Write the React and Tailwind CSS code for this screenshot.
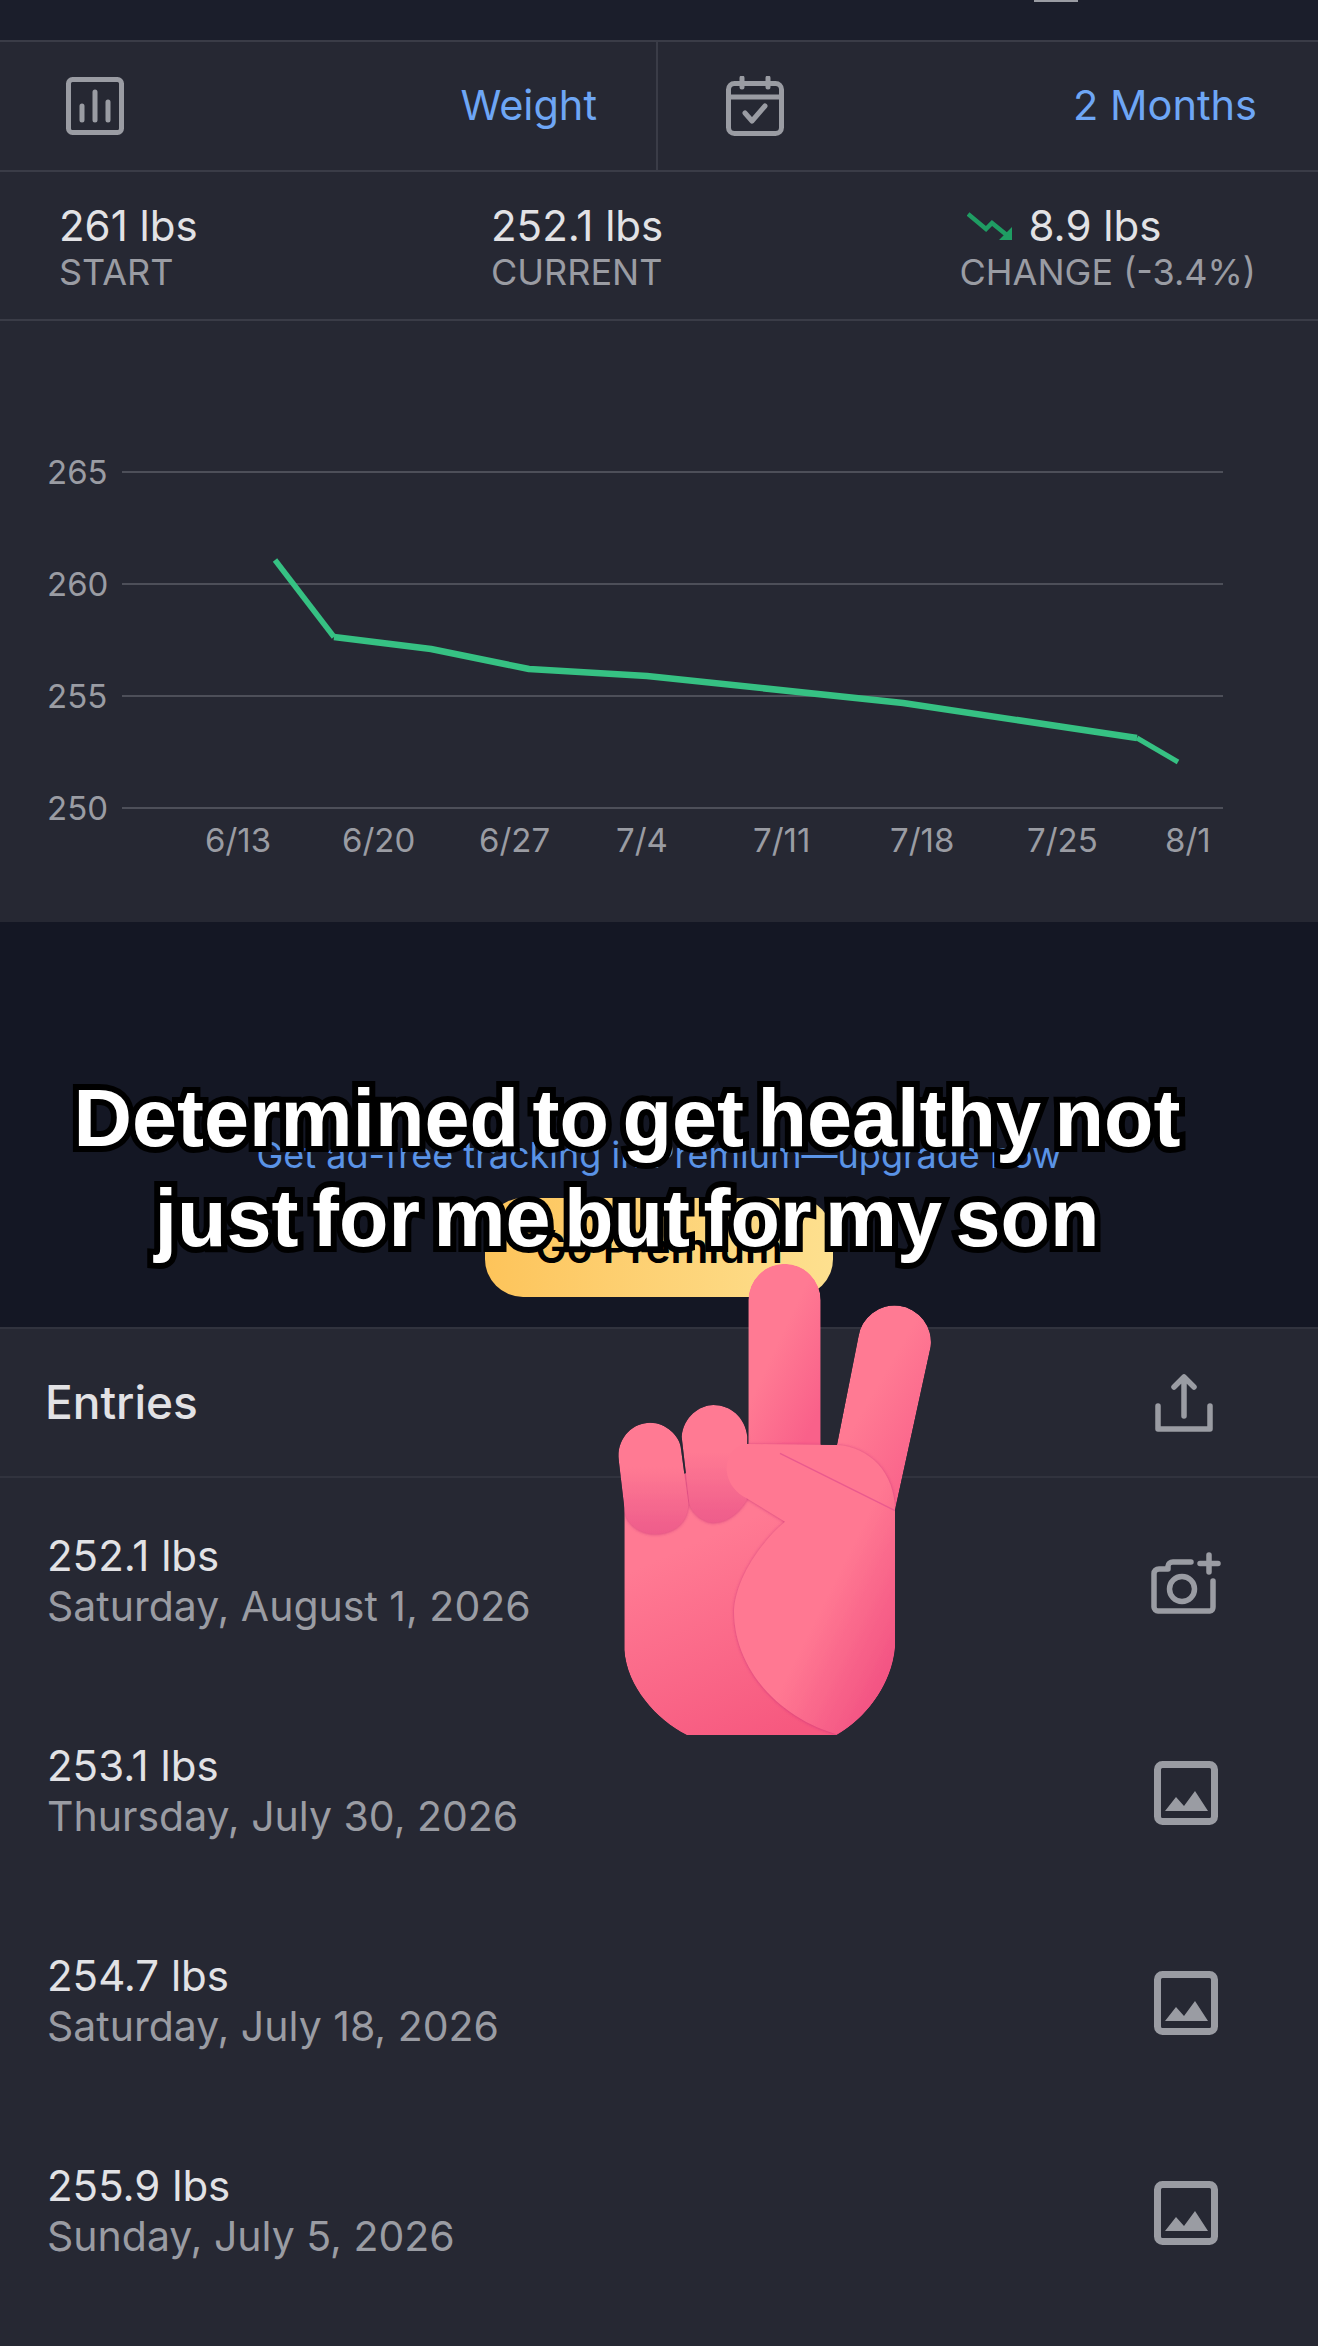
import React from 'react'

const entries = [
  { weight: '252.1 lbs', date: 'Saturday, August 1, 2026', camera: true },
  { weight: '253.1 lbs', date: 'Thursday, July 30, 2026' },
  { weight: '254.7 lbs', date: 'Saturday, July 18, 2026' },
  { weight: '255.9 lbs', date: 'Sunday, July 5, 2026' },
]

const yTicks = [
  { label: '265', y: 472 },
  { label: '260', y: 584 },
  { label: '255', y: 696 },
  { label: '250', y: 808 },
]

const xTicks = [
  { label: '6/13', x: 205 },
  { label: '6/20', x: 342 },
  { label: '6/27', x: 479 },
  { label: '7/4', x: 616 },
  { label: '7/11', x: 753 },
  { label: '7/18', x: 890 },
  { label: '7/25', x: 1027 },
  { label: '8/1', x: 1165 },
]

const fingers = {
  middle: 'M475 640V180A108 108 0 0 1 692 180V640Z',
  index: 'M736 640L805 292A108 108 0 0 1 1022 320L915 810Z',
  palm: 'M103 760V1230C110 1340 200 1440 290 1485H740C820 1440 905 1340 915 1220V780L470 640Z',
  ring: 'M275 590C280 530 330 495 370 495C420 495 465 530 472 590L470 780C440 830 400 848 370 848C340 848 305 820 298 790Z',
  pinky: 'M85 650C85 590 130 548 180 548C230 548 268 590 272 620L295 790C295 850 250 882 195 882C150 882 115 855 105 820Z',
  thumb: 'M470 612C430 615 410 650 410 690C412 730 440 760 470 775L585 845C530 890 440 1000 432 1110C430 1280 560 1430 740 1483C820 1440 905 1340 915 1220V810C915 700 840 620 740 615Z',
}

function ChartIcon() {
  return (
    <svg width="60" height="60" viewBox="0 0 60 60" fill="none" stroke="#9a9ca3" strokeWidth="5" strokeLinecap="round">
      <rect x="3.5" y="3.5" width="53" height="53" rx="4" />
      <path d="M17 30v14M30 16v28M43 26v18" />
    </svg>
  )
}

function CalendarIcon() {
  return (
    <svg width="60" height="60" viewBox="0 0 60 60" fill="none" stroke="#9a9ca3" strokeWidth="5" strokeLinecap="round" strokeLinejoin="round">
      <rect x="3.5" y="7.5" width="53" height="50" rx="6" />
      <path d="M3.5 21h53M17 2v9M43 2v9" />
      <path d="M20 37l7 8 13-15" />
    </svg>
  )
}

function ShareIcon() {
  return (
    <svg width="58" height="58" viewBox="0 0 58 58" fill="none" stroke="#9a9ca3" strokeWidth="5.5" strokeLinecap="round" strokeLinejoin="round">
      <path d="M3 32v23h52V32" />
      <path d="M29 42V4M19 13l10-10 10 10" />
    </svg>
  )
}

function CameraPlusIcon() {
  return (
    <svg width="70" height="62" viewBox="0 0 70 62" fill="none" stroke="#9a9ca3" strokeWidth="5.5" strokeLinecap="round" strokeLinejoin="round">
      <path d="M40 10H22c-3 0-5 2-5 4v3H8c-3 0-5 2-5 4.500V55c0 2 2 4 4 4h52c2 0 3-2 3-4V29" />
      <circle cx="31" cy="37" r="12.500" />
      <path d="M58 3v17M49 11.500h18" />
    </svg>
  )
}

function ImageIcon() {
  return (
    <svg width="64" height="64" viewBox="0 0 64 64" className="mr-[3px]">
      <rect x="3.500" y="3.500" width="57" height="57" rx="5" fill="none" stroke="#9a9ca3" strokeWidth="7" />
      <path d="M11 50l11-14 8 9 11-15 13 20z" fill="#9a9ca3" />
    </svg>
  )
}

function TrendDownIcon() {
  return (
    <svg width="46" height="28" viewBox="0 0 46 28" fill="none" className="shrink-0">
      <path d="M1 2l18 15 6-6 16 13" stroke="#1f9d63" strokeWidth="4.500" />
      <path d="M45 28H32l13-13z" fill="#1f9d63" />
    </svg>
  )
}

function PeaceHand() {
  return (
    <svg width="370" height="510" viewBox="0 0 1110 1530" className="absolute left-[590px] top-[1240px]">
      <defs>
        <linearGradient id="fingerUp" x1="0.3" y1="0.5" x2="0.7" y2="1">
          <stop offset="0" stopColor="#ff7a93" />
          <stop offset="1" stopColor="#f9618a" />
        </linearGradient>
        <linearGradient id="knuckle" x1="0.5" y1="0.4" x2="0.5" y2="1">
          <stop offset="0" stopColor="#ff7a93" />
          <stop offset="1" stopColor="#ee5c8b" />
        </linearGradient>
        <linearGradient id="palm" x1="0.3" y1="0.3" x2="0.6" y2="1">
          <stop offset="0" stopColor="#ff7a93" />
          <stop offset="1" stopColor="#f6587f" />
        </linearGradient>
        <linearGradient id="thumb" x1="0.2" y1="0.3" x2="0.95" y2="0.95">
          <stop offset="0.45" stopColor="#ff7892" />
          <stop offset="1" stopColor="#f04c80" />
        </linearGradient>
        <filter id="edge" x="-10%" y="-10%" width="120%" height="120%">
          <feDropShadow dx="0" dy="1" stdDeviation="5" floodColor="#c92f78" floodOpacity="0.8" />
        </filter>
        {/* keeps the crease shadows inside the hand */}
        <clipPath id="handShape">
          {Object.values(fingers).map((d) => (
            <path key={d} d={d} />
          ))}
        </clipPath>
      </defs>
      <g clipPath="url(#handShape)">
        <path d={fingers.middle} fill="url(#fingerUp)" />
        <path d={fingers.index} fill="url(#fingerUp)" />
        <path d={fingers.palm} fill="url(#palm)" />
        <g filter="url(#edge)">
          <path d={fingers.ring} fill="url(#knuckle)" />
          <path d={fingers.pinky} fill="url(#knuckle)" />
          <path d={fingers.thumb} fill="url(#thumb)" />
        </g>
        <path d="M570 640L915 812" stroke="#ea5a8e" strokeWidth="4" fill="none" />
      </g>
    </svg>
  )
}

export default function App() {
  return (
    <div className="relative w-[1318px] h-[2346px] overflow-hidden bg-[#262833] font-['Inter',sans-serif] text-[42px] text-[#e2e2e5]">
      <div className="h-[40px] bg-[#1b1e2b]">
        <div className="ml-[1034px] w-[44px] h-[2px] bg-[#9a9ca3]" />
      </div>

      {/* picker row */}
      <div className="flex h-[132px] border-y-2 border-[#3a3c47]">
        <div className="flex w-[658px] items-center justify-between pl-[65px] pr-[59px] border-r-2 border-[#3a3c47]">
          <ChartIcon />
          <span className="-mt-[2px] text-[41.5px] text-[#6ea6f5]">Weight</span>
        </div>
        <div className="flex flex-1 items-center justify-between pl-[67px] pr-[61px]">
          <CalendarIcon />
          <span className="-mt-[2px] text-[41.5px] text-[#6ea6f5]">2 Months</span>
        </div>
      </div>

      {/* stats */}
      <div className="flex h-[149px] justify-between pl-[59px] pr-[62px] pt-[30px] border-b-2 border-[#3a3c47]">
        <div className="w-[432px]">
          <div className="leading-[48px]">261 lbs</div>
          <div className="text-[36px] leading-[44px] text-[#9a9ca3]">START</div>
        </div>
        <div className="flex-1">
          <div className="leading-[48px]">252.1 lbs</div>
          <div className="text-[36px] leading-[44px] text-[#9a9ca3]">CURRENT</div>
        </div>
        <div>
          <div className="flex items-center gap-[16px] pl-[7px] leading-[48px]">
            <TrendDownIcon />
            <span>8.9 lbs</span>
          </div>
          <div className="text-[36px] leading-[44px] text-[#9a9ca3]">CHANGE (-3.4%)</div>
        </div>
      </div>

      {/* chart */}
      <svg className="block w-[1318px] h-[601px]" viewBox="0 321 1318 601">
        {yTicks.map((t) => (
          <g key={t.label}>
            <line x1="122" x2="1223" y1={t.y} y2={t.y} stroke="#4d4f59" strokeWidth="2" />
            <text x="47" y={t.y + 12} fontSize="33" fill="#9a9ca3">{t.label}</text>
          </g>
        ))}
        {xTicks.map((t) => (
          <text key={t.label} x={t.x} y="852" fontSize="33" fill="#9a9ca3">{t.label}</text>
        ))}
        <line x1="275" y1="560" x2="334" y2="637" stroke="#36c183" strokeWidth="5.5" />
        <polyline
          points="334,637 431,649 529,669 647,676 903,703 1137,738"
          fill="none"
          stroke="#36c183"
          strokeWidth="6.5"
          strokeLinejoin="round"
        />
        <line x1="1137" y1="738" x2="1178" y2="762" stroke="#36c183" strokeWidth="5" />
      </svg>

      {/* promo */}
      <div className="flex h-[407px] flex-col items-center bg-[#141724] pt-[212px] border-b-2 border-[#31333e]">
        <div className="text-[36px] leading-[42px] text-[#5a93e6]">Get ad-free tracking in Premium—upgrade now</div>
        <div className="mt-[22px] flex h-[99px] w-[348px] items-center justify-center rounded-[38px] bg-gradient-to-r from-[#fdc45a] to-[#fde08f] text-[42px] font-semibold text-black">
          Go Premium
        </div>
      </div>

      {/* entries */}
      <div className="flex h-[149px] items-center justify-between pl-[45px] pr-[105px] border-b-2 border-[#31333e]">
        <span className="text-[46px] font-medium">Entries</span>
        <ShareIcon />
      </div>
      {entries.map((e) => (
        <div key={e.date} className="flex h-[210px] items-center justify-between pl-[47px] pr-[97px]">
          <div className="-mt-[4px]">
            <div className="leading-[50px]">{e.weight}</div>
            <div className="text-[41px] leading-[50px] text-[#9a9ca3]">{e.date}</div>
          </div>
          {e.camera ? <CameraPlusIcon /> : <ImageIcon />}
        </div>
      ))}

      {/* video caption overlay */}
      <div className="absolute left-0 top-[1068px] w-[1254px] text-center font-['Liberation_Sans',sans-serif] text-[81px] font-bold leading-[100px] text-white [word-spacing:-9px] [-webkit-text-stroke:12px_#000] [paint-order:stroke_fill]">
        <div>Determined to get healthy not</div>
        <div>just for me but for my son</div>
      </div>
      <PeaceHand />
    </div>
  )
}
